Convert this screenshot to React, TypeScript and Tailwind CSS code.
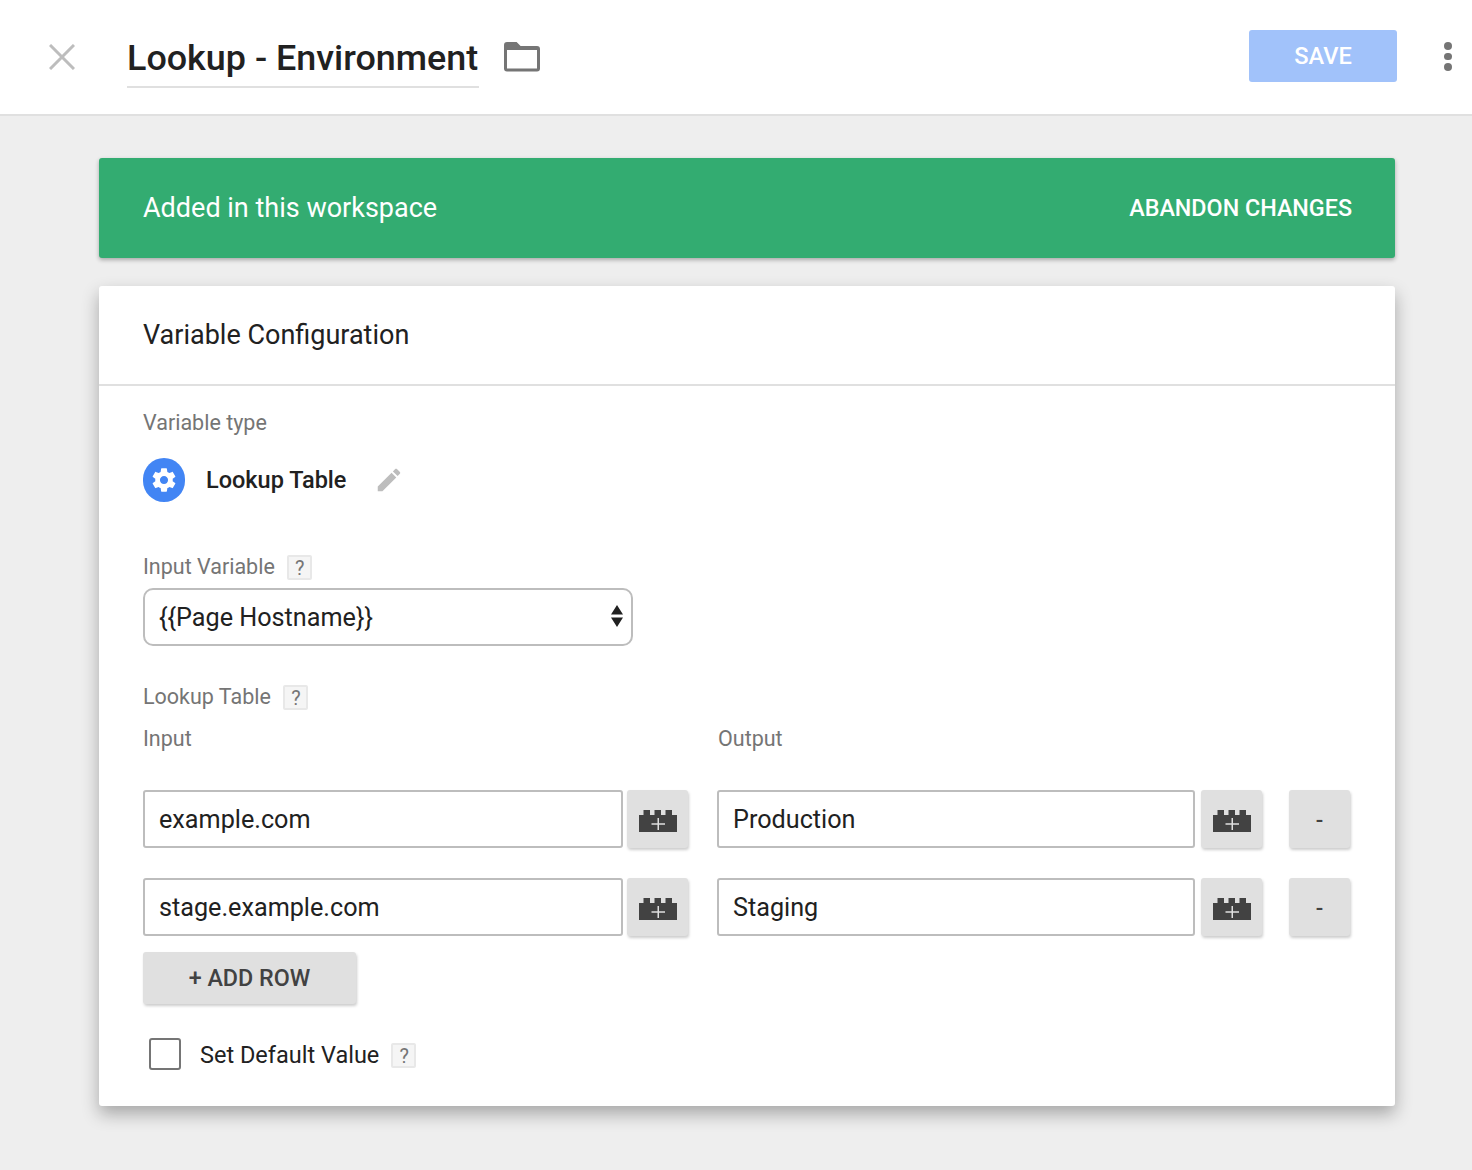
import { ReactNode } from "react"

function Help() {
    return (
        <span className="inline-flex w-[25px] h-[25px] pt-[2px] pl-[1px] items-center justify-center rounded-[2px] border-2 border-[#e8e8e8] bg-[#f5f5f5] text-[20px] leading-none text-[#757575]">
            ?
        </span>
    )
}

function BrickIcon() {
    return (
        <svg className="mt-[4px]" width="38" height="22" viewBox="0 0 38 22">
            <path d="M0 5H4.500V0H11V5H15.500V0H22V5H26.500V0H33V5H38V22H0Z" fill="#424242" />
            <path d="M18.500 8H20V13.250H26V14.750H20V20H18.500V14.750H12.500V13.250H18.500Z" fill="#e0e0e0" />
        </svg>
    )
}

function IconBox({ children }: { children: ReactNode }) {
    return (
        <div className="w-[61px] h-[58px] shrink-0 flex items-center justify-center rounded-[3px] bg-[#e0e0e0] shadow-[1px_2px_3px_rgba(0,0,0,0.2)]">
            {children}
        </div>
    )
}

function TextField({ value, className }: { value: string; className: string }) {
    return (
        <div className={`h-[58px] shrink-0 flex items-center px-[14px] pt-[2px] rounded-[3px] border-2 border-[#bdbdbd] bg-white text-[25.200px] text-[#212121] ${className}`}>
            {value}
        </div>
    )
}

function Row({ input, output }: { input: string; output: string }) {
    return (
        <div className="flex">
            <TextField value={input} className="w-[480px]" />
            <div className="ml-[4px]">
                <IconBox><BrickIcon /></IconBox>
            </div>
            <div className="ml-[29px]">
                <TextField value={output} className="w-[478px]" />
            </div>
            <div className="ml-[6px]">
                <IconBox><BrickIcon /></IconBox>
            </div>
            <div className="ml-[27px]">
                <IconBox><span className="pt-[2px] text-[22px] font-medium text-[#424242]">-</span></IconBox>
            </div>
        </div>
    )
}

export default function App() {
    return (
        <div className="min-h-[1170px] bg-[#eeeeee] font-['Roboto',sans-serif]">
            {/* Top bar */}
            <header className="h-[116px] flex items-start bg-white border-b-2 border-[#e0e0e0]">
                <svg className="ml-[49px] mt-[44px] shrink-0" width="26" height="26" viewBox="0 0 26 26">
                    <path d="M1 1L25 25M25 1L1 25" stroke="#bdbdbd" strokeWidth="3" fill="none" />
                </svg>
                <div className="ml-[52px] mt-[34px] w-[352px] h-[54px] border-b-2 border-[#e0e0e0] text-[35.900px] leading-[48px] font-medium text-[#212121] whitespace-nowrap">
                    Lookup - Environment
                </div>
                <svg className="ml-[25px] mt-[42px] shrink-0" width="36" height="30" viewBox="0 0 36 30">
                    <path d="M3 1.500H12L16 5.500H33C34 5.500 34.500 6 34.500 7V26.500C34.500 27.500 34 28 33 28H3C2 28 1.500 27.500 1.500 26.500V3C1.500 2 2 1.500 3 1.500Z" fill="none" stroke="#757575" strokeWidth="3" />
                    <path d="M3 1H12L16 5H34V8H1V3Z" fill="#757575" />
                </svg>
                <button className="ml-auto mt-[30px] w-[148px] h-[52px] pt-[2px] rounded-[3px] bg-[#a1c2fa] text-white text-[23.600px] font-medium">
                    SAVE
                </button>
                <div className="ml-[47px] mr-[20.500px] mt-[42px] flex flex-col gap-[3px]">
                    <span className="w-[7.500px] h-[7.500px] rounded-full bg-[#757575]" />
                    <span className="w-[7.500px] h-[7.500px] rounded-full bg-[#757575]" />
                    <span className="w-[7.500px] h-[7.500px] rounded-full bg-[#757575]" />
                </div>
            </header>

            <main className="pt-[42px] pl-[99px] w-[1395px]">
                {/* Status banner */}
                <div className="h-[100px] flex items-center justify-between pl-[44px] pr-[43px] rounded-[3px] bg-[#33ac71] shadow-[0_2px_4px_rgba(0,0,0,0.3)] text-white">
                    <span className="text-[27px] font-normal">Added in this workspace</span>
                    <span className="text-[23.300px] font-medium">ABANDON CHANGES</span>
                </div>

                {/* Configuration card */}
                <section className="mt-[28px] h-[820px] rounded-[3px] bg-white shadow-[0_8px_17px_rgba(0,0,0,0.3)]">
                    <div className="h-[100px] flex items-center px-[44px] border-b-2 border-[#e0e0e0] text-[27px] text-[#212121]">
                        Variable Configuration
                    </div>

                    <div className="pl-[44px] pr-[44px]">
                        <div className="pt-[22px] h-[52px] text-[21.500px] leading-[30px] text-[#757575]">Variable type</div>

                        <div className="mt-[20px] h-[44px] flex items-center">
                            <div className="w-[42px] h-[44px] rounded-full bg-[#4285f4] flex items-center justify-center">
                                <svg width="28" height="28" viewBox="0 0 24 24">
                                    <path fill="#ffffff" d="M19.430 12.980c.040-.320.070-.640.070-.980s-.030-.660-.070-.980l2.110-1.650c.190-.150.240-.420.120-.640l-2-3.460c-.120-.220-.390-.300-.610-.220l-2.490 1c-.520-.400-1.080-.730-1.690-.980l-.380-2.650C14.460 2.180 14.250 2 14 2h-4c-.250 0-.460.180-.490.420l-.380 2.650c-.610.250-1.170.590-1.690.980l-2.490-1c-.230-.090-.490 0-.610.220l-2 3.460c-.130.220-.070.490.120.640l2.110 1.650c-.040.320-.070.650-.070.980s.030.660.070.980l-2.110 1.650c-.190.150-.240.420-.120.640l2 3.460c.120.220.390.300.610.220l2.490-1c.520.400 1.080.730 1.690.980l.380 2.650c.030.240.240.420.490.420h4c.250 0 .460-.180.490-.420l.380-2.650c.610-.250 1.170-.590 1.690-.980l2.490 1c.230.090.490 0 .610-.220l2-3.460c.120-.220.070-.490-.120-.640l-2.110-1.650zM12 15.500c-1.930 0-3.500-1.570-3.500-3.500s1.570-3.500 3.500-3.500 3.500 1.570 3.500 3.500-1.570 3.500-3.500 3.500z" />
                                </svg>
                            </div>
                            <span className="ml-[21px] pt-[2px] text-[23.500px] font-medium text-[#212121]">Lookup Table</span>
                            <svg className="ml-[28px]" width="30" height="30" viewBox="0 0 24 24">
                                <path fill="#bdbdbd" d="M3 17.250V21h3.750L17.810 9.940l-3.750-3.750L3 17.250zM20.710 7.040c.390-.390.390-1.020 0-1.410l-2.340-2.340c-.390-.390-1.020-.390-1.410 0l-1.830 1.830 3.750 3.750 1.830-1.830z" />
                            </svg>
                        </div>

                        <div className="mt-[50px] h-[30px] flex items-center gap-[12px]">
                            <span className="text-[21.500px] text-[#757575]">Input Variable</span>
                            <Help />
                        </div>

                        <div className="relative mt-[6px] w-[490px] h-[58px] flex items-center px-[14px] pt-[2px] rounded-[10px] border-2 border-[#bdbdbd] text-[25.200px] text-[#212121]">
                            {"{{Page Hostname}}"}
                            <svg className="absolute right-[8px] top-[14px]" width="12" height="24" viewBox="0 0 12 24">
                                <path d="M6 1L12 10.500H0ZM0 13.500H12L6 23Z" fill="#212121" />
                            </svg>
                        </div>

                        <div className="mt-[36px] h-[30px] flex items-center gap-[12px]">
                            <span className="text-[21.500px] text-[#757575]">Lookup Table</span>
                            <Help />
                        </div>

                        <div className="mt-[12px] h-[30px] flex items-center text-[21.500px] text-[#757575]">
                            <span className="w-[575px]">Input</span>
                            <span>Output</span>
                        </div>

                        <div className="mt-[36px] flex flex-col gap-[30px]">
                            <Row input="example.com" output="Production" />
                            <Row input="stage.example.com" output="Staging" />
                        </div>

                        <button className="mt-[16px] w-[213px] h-[52px] pt-[1px] rounded-[3px] bg-[#e0e0e0] shadow-[1px_2px_3px_rgba(0,0,0,0.2)] text-[23.300px] font-medium text-[#424242]">
                            + ADD ROW
                        </button>

                        <div className="mt-[30px] ml-[6px] flex items-center">
                            <div className="w-[32px] h-[32px] rounded-[3px] border-2 border-[#757575]" />
                            <span className="ml-[19px] mt-[4px] text-[23.500px] text-[#212121]">Set Default Value</span>
                            <span className="ml-[12px] mt-[6px]"><Help /></span>
                        </div>
                    </div>
                </section>
            </main>
        </div>
    )
}
